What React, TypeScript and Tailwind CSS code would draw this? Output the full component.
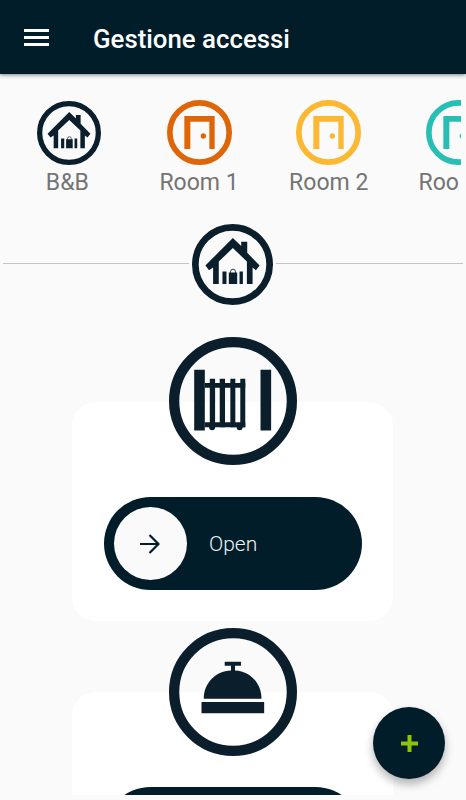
import { FunctionComponent, ReactNode } from "react";

interface IconProps {
  className?: string;
}

const HouseIcon: FunctionComponent<IconProps> = ({ className }) => (
  <svg viewBox="0 0 242 242" className={className} fill="currentColor">
    <circle cx="121" cy="121" r="111" fill="none" stroke="currentColor" strokeWidth="20" />
    <path d="M122 42L147 66V53H165V86L202 124L191 138L181 130V179H164V112L122 72L80 112V179H63V130L51 138L40 124Z" />
    <path d="M91 142h12v37H91zM142 142h10v37h-10zM110 145h25v34h-25z" />
    <path d="M115 146v-3q0-8 7.500-8t7.500 8v3" fill="none" stroke="currentColor" strokeWidth="2.500" />
  </svg>
);

const DoorIcon: FunctionComponent<IconProps> = ({ className }) => (
  <svg viewBox="0 0 195 195" className={className} fill="currentColor">
    <circle cx="97.500" cy="97.500" r="89" fill="none" stroke="currentColor" strokeWidth="17" />
    <path d="M52 48h91v99h-16V65H70v82H52z" />
    <circle cx="109" cy="108" r="8" />
  </svg>
);

const GateIcon: FunctionComponent<IconProps> = ({ className }) => (
  <svg viewBox="0 0 386 386" className={className} fill="currentColor">
    <circle cx="193" cy="193" r="177.500" fill="none" stroke="currentColor" strokeWidth="31" />
    <path d="M76 99h32v183H76zM276 99h32v183h-32z" />
    <path d="M123 126h16v146h-16zM153 126h16v146h-16zM185 126h15v146h-15zM215 126h15v146h-15z" />
    <path d="M108 139h122v14H108zM108 257h122v15H108z" />
    <circle cx="130" cy="272" r="9" />
    <circle cx="213" cy="272" r="9" />
  </svg>
);

const BellIcon: FunctionComponent<IconProps> = ({ className }) => (
  <svg viewBox="0 0 386 386" className={className} fill="currentColor">
    <circle cx="193" cy="193" r="177.500" fill="none" stroke="currentColor" strokeWidth="31" />
    <path d="M168 102h49v12h-18v14C246 130 279 168 279 213H105C105 168 138 130 187 128V114H168z" />
    <path d="M98 223h189v34H98z" />
  </svg>
);

interface RoomProps {
  name: string;
  labelClassName?: string;
  children: ReactNode;
}

const Room: FunctionComponent<RoomProps> = ({ name, labelClassName = "", children }) => (
  <li className="w-[129.700px] shrink-0 flex flex-col items-center">
    <div className="h-[65px] flex items-center">{children}</div>
    <span className={`mt-1 text-[23px] leading-7 text-[#747474] whitespace-nowrap ${labelClassName}`}>{name}</span>
  </li>
);

interface AccessCardProps {
  icon: ReactNode;
  iconClassName: string;
  label?: string;
}

const AccessCard: FunctionComponent<AccessCardProps> = ({ icon, iconClassName, label }) => (
  <section className="w-[321px] h-[219px] shrink-0 rounded-[24px] bg-white flex flex-col items-center">
    <div className={`h-[128px] ml-px text-[#0b1e2c] ${iconClassName}`}>{icon}</div>
    <button className="ml-px w-[258px] h-[93px] shrink-0 rounded-full bg-[#001d29] flex items-center pl-2.5">
      <span className="size-[73px] rounded-full bg-[#fafafa] flex items-center justify-center">
        <svg viewBox="0 0 20 20" className="mr-0.5 size-5" fill="none" stroke="#001d29" strokeWidth="2.200">
          <path d="M0 10h19M9.500 1l9 9-9 9" />
        </svg>
      </span>
      {label && <span className="mt-0.5 ml-[22px] text-[21px] font-light text-[#f0f3f4]">{label}</span>}
    </button>
  </section>
);

const App: FunctionComponent = () => {
  return (
    <div className="relative h-[800px] w-[466px] overflow-hidden bg-[#fafafa] font-['Roboto',sans-serif] flex flex-col">
      <header className="relative h-[74px] shrink-0 bg-[#001d29] shadow-[0_1px_4px_rgba(0,0,0,0.5)] flex items-center pt-[3px]">
        <button className="-mt-[3px] ml-6 w-[25px] h-[17px] flex flex-col justify-between">
          <span className="h-[3px] w-full bg-white" />
          <span className="h-[3px] w-full bg-white" />
          <span className="h-[3px] w-full bg-white" />
        </button>
        <h1 className="mt-0.5 ml-11 text-[25.800px] font-medium text-white whitespace-nowrap">Gestione accessi</h1>
      </header>

      <ul className="mt-[26px] mr-[5px] pl-[4.500px] h-[100px] shrink-0 flex overflow-hidden">
        <Room name="B&amp;B" labelClassName="mr-1">
          <HouseIcon className="size-16 text-[#0b1e2c]" />
        </Room>
        <Room name="Room 1">
          <DoorIcon className="size-[65px] text-[#df6509]" />
        </Room>
        <Room name="Room 2">
          <DoorIcon className="size-[65px] text-[#fcb831]" />
        </Room>
        <Room name="Roo" labelClassName="self-start ml-[25px]">
          <DoorIcon className="size-[65px] text-[#27bfb5]" />
        </Room>
      </ul>

      <div className="mt-[23px] px-[3px] h-[81px] shrink-0 flex items-center gap-[3px]">
        <hr className="w-[186px] border-[#c4c4c4]" />
        <HouseIcon className="mt-px size-[81px] shrink-0 text-[#0b1e2c]" />
        <hr className="flex-1 border-[#c4c4c4]" />
      </div>

      <main className="mb-[5px] pt-[98px] pr-px min-h-0 flex-1 overflow-hidden flex flex-col items-center gap-[71px]">
        <AccessCard label="Open" iconClassName="-mt-[65px] mb-8" icon={<GateIcon className="size-[128px]" />} />
        <AccessCard iconClassName="-mt-16 mb-[31px]" icon={<BellIcon className="size-[128px]" />} />
      </main>

      <button className="absolute right-[21px] bottom-[21px] size-[72px] rounded-full bg-[#001d29] shadow-[0_5px_10px_rgba(0,0,0,0.3)] flex items-center justify-center">
        <svg viewBox="0 0 17 17" className="size-[17px]" fill="#8cc40c">
          <path d="M6.500 0h4v6.500H17v4h-6.500V17h-4v-6.500H0v-4h6.500z" />
        </svg>
      </button>
    </div>
  );
};

export default App;
